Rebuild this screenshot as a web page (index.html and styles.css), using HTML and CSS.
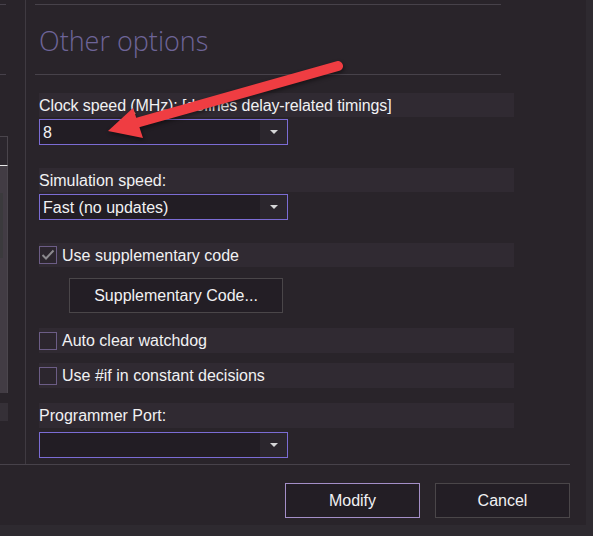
FILE: index.html
```html
<!DOCTYPE html>
<html lang="en">
<head>
<meta charset="utf-8">
<title>Other options</title>
<link rel="stylesheet" href="styles.css">
</head>
<body>
<div class="dialog">
  <div class="body">
    <div class="side">
      <div class="side-rule first"></div>
      <div class="side-rule second"></div>
      <div class="side-tab"></div>
      <div class="side-panel"><div class="side-strip"></div></div>
      <div class="side-block"></div>
    </div>
    <div class="main">
      <div class="rule top"></div>
      <h1 class="title">Other options</h1>
      <div class="rule"></div>

      <div class="row r1">Clock speed (MHz): [defines delay-related timings]</div>
      <div class="select s1">
        <span class="select-value">8</span>
        <span class="select-btn"><span class="caret"></span></span>
      </div>

      <div class="row r2">Simulation speed:</div>
      <div class="select s1">
        <span class="select-value">Fast (no updates)</span>
        <span class="select-btn"><span class="caret"></span></span>
      </div>

      <div class="row r2 check-row">
        <span class="box">
          <svg viewBox="0 0 18 18" width="18" height="18"><polyline points="3.5,9 7,12.5 14.5,4.5" fill="none" stroke="#8c8a8e" stroke-width="2"/></svg>
        </span>
        <span>Use supplementary code</span>
      </div>
      <button class="btn code-btn">Supplementary Code...</button>

      <div class="row r4 check-row tall"><span class="box"></span><span>Auto clear watchdog</span></div>
      <div class="row r5 check-row tall"><span class="box"></span><span>Use #if in constant decisions</span></div>

      <div class="row r4 tall">Programmer Port:</div>
      <div class="select s3">
        <span class="select-value"></span>
        <span class="select-btn"><span class="caret"></span></span>
      </div>
    </div>
  </div>
  <div class="footer">
    <button class="btn primary">Modify</button>
    <button class="btn">Cancel</button>
  </div>
</div>

<svg class="arrow" width="593" height="536" viewBox="0 0 593 536">
  <line x1="338" y1="66" x2="136" y2="123" stroke="#ef3d42" stroke-width="10" stroke-linecap="round"/>
  <polygon points="108,131 133,108 143,138" fill="#ef3d42"/>
</svg>
</body>
</html>
```

FILE: styles.css
```css
* { box-sizing: border-box; }

html, body { margin: 0; padding: 0; }

body {
  width: 593px;
  height: 536px;
  overflow: hidden;
  position: relative;
  background: #2e2a30;
  font-family: "Liberation Sans", Arial, sans-serif;
  font-size: 16px;
  color: #f1f1f3;
}

.dialog {
  width: 586px;
  height: 525px;
  background: #29242a;
  display: flex;
  flex-direction: column;
}

.body {
  display: flex;
  height: 464px;
}

/* left navigation column, mostly scrolled out of view */
.side {
  width: 26px;
  flex: none;
  border-right: 1px solid #3f3a41;
  display: flex;
  flex-direction: column;
}

.side-rule { width: 6px; height: 1px; background: #46414a; }
.side-rule.first { margin-top: 4px; }
.side-rule.second { margin-top: 69px; }

.side-tab {
  margin-top: 61px;
  width: 8px;
  height: 30px;
  border: 1px solid #4a454c;
  border-left: none;
  border-bottom: 1px solid #e8e8e8;
  background: #2b262d;
}

.side-panel {
  width: 8px;
  height: 227px;
  background: #423c44;
  border-right: 1px solid #4b464d;
  padding-top: 27px;
}

.side-strip { width: 3px; height: 65px; background: #3b3a3d; }

.side-block {
  margin-top: 10px;
  width: 8px;
  height: 18px;
  background: #353037;
}

.main {
  flex: 1;
  padding-left: 9px;
  display: flex;
  flex-direction: column;
  align-items: flex-start;
}

.rule { width: 466px; height: 1px; background: #47424a; flex: none; }
.rule.top { margin-top: 4px; }

.title {
  margin: 17px 0 14px 4px;
  font-family: "Open Sans", "Noto Sans", sans-serif;
  font-weight: 300;
  font-size: 27px;
  line-height: 38px;
  color: #6e6499;
}

.row {
  margin-left: 4px;
  width: 475px;
  height: 24px;
  line-height: 25px;
  background: #302a32;
  white-space: nowrap;
  flex: none;
}
.row.tall { height: 25px; line-height: 26px; }
.r1 { margin-top: 18px; letter-spacing: -0.1px; }
.r2 { margin-top: 23px; }
.r4 { margin-top: 15px; }
.r5 { margin-top: 10px; }

.check-row { display: flex; align-items: center; gap: 5px; }

.box {
  width: 18px;
  height: 18px;
  flex: none;
  border: 1px solid #6c5d86;
  background: #2c262e;
  display: block;
}
.box svg { display: block; margin: -1px; }

.select {
  margin-left: 4px;
  margin-top: 2px;
  width: 249px;
  height: 26px;
  border: 1px solid #7b6cd4;
  background: #221d24;
  display: flex;
  flex: none;
}
.select.s3 { margin-top: 4px; }

.select-value {
  flex: 1;
  padding-left: 2px;
  line-height: 25px;
  white-space: nowrap;
}
.select.s1 .select-value { padding-left: 3px; }

.select-btn {
  width: 27px;
  background: #2b262d;
  display: flex;
  align-items: center;
  justify-content: center;
}

.caret {
  width: 0;
  height: 0;
  border-left: 4px solid transparent;
  border-right: 4px solid transparent;
  border-top: 4px solid #d6d6d8;
  margin-left: 1px;
}

.btn {
  font-family: "Liberation Sans", Arial, sans-serif;
  font-size: 16px;
  color: #f1f1f3;
  background: #231e25;
  border: 1px solid #4a4649;
  height: 35px;
  width: 135px;
  padding: 0;
  flex: none;
}

.code-btn {
  margin: 11px 0 0 34px;
  width: 214px;
}

.footer {
  width: 570px;
  border-top: 1px solid #47424a;
  display: flex;
  justify-content: flex-end;
  gap: 15px;
  padding-top: 18px;
}

.btn.primary { border-color: #a48fc8; }

.arrow {
  position: absolute;
  left: 0;
  top: 0;
  pointer-events: none;
  filter: drop-shadow(1px 2px 2px rgba(0, 0, 0, 0.45));
}
```
